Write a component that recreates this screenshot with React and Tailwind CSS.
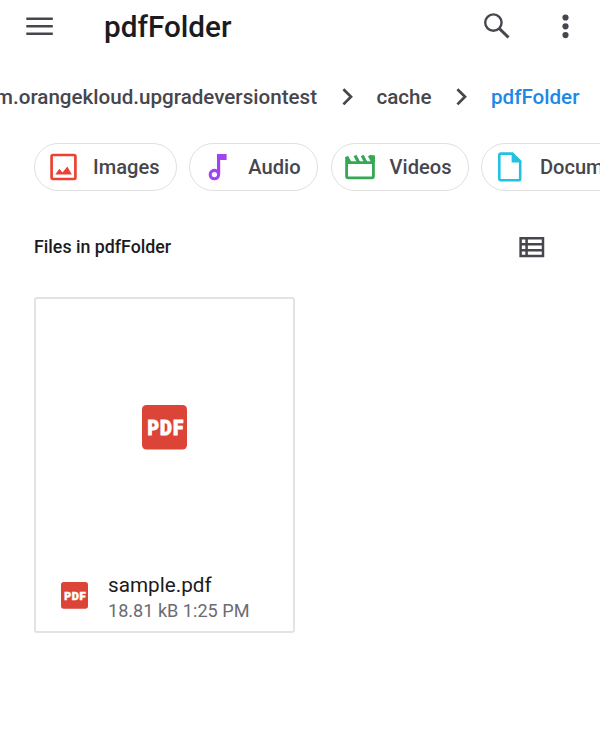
import React from "react";

function MenuIcon() {
  return (
    <svg className="h-[20px] w-[28px] shrink-0" viewBox="0 0 28 20" fill="#46464f">
      <path d="M.3.4h26.5v2.7H.3zM.3 7.9h26.5v2.7H.3zM.3 15.4h26.5v2.7H.3z" />
    </svg>
  );
}

function SearchIcon() {
  return (
    <svg className="h-[27px] w-[28px] overflow-visible" viewBox="0 0 28 27" fill="none" stroke="#46464f">
      <circle cx="10.4" cy="8.6" r="8.2" strokeWidth="2.4" />
      <path d="M16.3 14.5l9.2 9" strokeWidth="3.1" />
    </svg>
  );
}

function MoreIcon() {
  return (
    <svg className="h-[26px] w-[8px]" viewBox="0 0 8 26" fill="#46464f">
      <circle cx="4.5" cy="3.5" r="3.1" />
      <circle cx="4.5" cy="12.3" r="3.1" />
      <circle cx="4.5" cy="21.1" r="3.1" />
    </svg>
  );
}

function Chevron() {
  return (
    <svg className="h-[18px] w-[12px] shrink-0" viewBox="0 0 12 18" fill="none" stroke="#46464f" strokeWidth="2.7">
      <path d="M1.4 1.2L9 8.8l-7.6 7.6" />
    </svg>
  );
}

function ImageIcon() {
  return (
    <svg className="h-[28px] w-[28px] shrink-0" viewBox="0 0 28 28">
      <rect x="2.6" y="2" width="23.8" height="24" rx="1.4" fill="none" stroke="#ea4335" strokeWidth="2.7" />
      <path d="M6.3 21.4l4-5.6 3.3 3.7 4.7-5.9 4.6 7.8z" fill="#ea4335" />
    </svg>
  );
}

function AudioIcon() {
  return (
    <svg className="h-[28px] w-[20px] shrink-0" viewBox="0 0 20 28">
      <circle cx="6.4" cy="21.6" r="4.2" fill="none" stroke="#a142f4" strokeWidth="3.1" />
      <path d="M9 1h9.6v6h-6.4v14.6H9z" fill="#a142f4" />
    </svg>
  );
}

function VideoIcon() {
  return (
    <svg className="h-[26px] w-[31px] shrink-0" viewBox="0 0 31 26" fill="none" stroke="#34a853">
      <path d="M1.6 3v19.3q0 1.6 1.6 1.6h23.6q1.6 0 1.6-1.6V2.5M1.6 8.7h26.8" strokeWidth="2.8" />
      <path d="M1.6 2.4l3.5 6.4M10 1.5l3.7 7M17.2 1.5l3.7 7M24.4 1.5l3.7 7" strokeWidth="3.2" />
      <path d="M24.5 1.3h5.3v7h-2.4z" fill="#34a853" stroke="none" />
    </svg>
  );
}

function DocumentIcon() {
  return (
    <svg className="h-[30px] w-[25px] shrink-0" viewBox="0 0 25 30">
      <path d="M2.9 1.6h11.5l7.8 7.8v17.3q0 1.6-1.6 1.6H2.9q-1.6 0-1.6-1.6V3.2q0-1.6 1.6-1.6z" fill="none" stroke="#24c1e0" strokeWidth="2.6" />
      <path d="M13.6 1.2l9.3 9.3h-9.3z" fill="#24c1e0" />
    </svg>
  );
}

function ListIcon() {
  return (
    <svg className="h-[21px] w-[26px]" viewBox="0 0 26 21" fill="none" stroke="#46464f" strokeWidth="2.5">
      <path d="M1.6 1.3h22.4v17.8H1.6zM7.6 1.3v17.8M1.6 7.2h22.4M1.6 13.2h22.4" />
    </svg>
  );
}

function PdfIcon({ className }) {
  return (
    <svg className={className} viewBox="0 0 45 45">
      <rect width="45" height="44.5" rx="4.5" fill="#db4437" />
      <g fill="#fff" stroke="#fff" strokeWidth=".9" className="font-[Roboto,sans-serif] text-[19.5px] font-black">
        <text x="5.4" y="29.8" textLength="11.4" lengthAdjust="spacingAndGlyphs">P</text>
        <text x="18" y="29.8" textLength="11.8" lengthAdjust="spacingAndGlyphs">D</text>
        <text x="30.9" y="29.8" textLength="10.2" lengthAdjust="spacingAndGlyphs">F</text>
      </g>
    </svg>
  );
}

export default function App() {
  return (
    <div className="h-[756px] w-[600px] overflow-hidden bg-white font-[Roboto,sans-serif] text-[#46464f]">
      <header className="flex h-[54px] items-center pr-[31px] pl-[26px]">
        <MenuIcon />
        <h1 className="ml-[50px] text-[29.7px] leading-[54px] font-medium whitespace-nowrap text-[#1b1b21]">pdfFolder</h1>
        <div className="ml-auto flex items-center gap-[50px]">
          <SearchIcon />
          <MoreIcon />
        </div>
      </header>

      <nav className="mt-[28px] flex h-[30px] items-center text-[20.6px] font-medium whitespace-nowrap">
        <div className="flex w-[317px] shrink-0 justify-end">
          <span>m.orangekloud.upgradeversiontest</span>
        </div>
        <div className="ml-[25px] flex"><Chevron /></div>
        <span className="ml-[22.5px] w-[56px]">cache</span>
        <div className="ml-[23.5px] flex"><Chevron /></div>
        <span className="ml-[23px] text-[#1e88e5]">pdfFolder</span>
      </nav>

      <div className="mt-[31px] flex h-[48px] gap-[12.3px] pl-[34px] text-[20.1px] font-medium whitespace-nowrap">
        <div className="flex w-[143px] shrink-0 items-center rounded-full border-[1.5px] border-[#e0e0e0] pl-[14px]">
          <ImageIcon />
          <span className="ml-[16px]">Images</span>
        </div>
        <div className="flex w-[129px] shrink-0 items-center rounded-full border-[1.5px] border-[#e0e0e0] pl-[18px]">
          <AudioIcon />
          <span className="ml-[20px]">Audio</span>
        </div>
        <div className="flex w-[138px] shrink-0 items-center rounded-full border-[1.5px] border-[#e0e0e0] pl-[13px]">
          <VideoIcon />
          <span className="ml-[14px]">Videos</span>
        </div>
        <div className="flex w-[182px] shrink-0 items-center rounded-full border-[1.5px] border-[#e0e0e0] pl-[16px]">
          <DocumentIcon />
          <span className="ml-[17px]">Documents</span>
        </div>
      </div>

      <div className="mt-[41px] flex h-[30px] items-center justify-between pr-[55px] pl-[34px]">
        <h2 className="text-[17.8px] font-medium whitespace-nowrap text-[#1b1b21]">Files in pdfFolder</h2>
        <ListIcon />
      </div>

      <article className="mt-[35px] ml-[34px] flex h-[336px] w-[261px] flex-col rounded-[3px] border-2 border-[#e3e3e3]">
        <div className="flex h-[257px] items-center justify-center">
          <PdfIcon className="h-[45px] w-[45px]" />
        </div>
        <div className="flex h-[75px] items-center pt-[3px] pl-[25px]">
          <PdfIcon className="h-[27px] w-[27px]" />
          <div className="mt-[5px] ml-[20px] whitespace-nowrap">
            <p className="text-[20.7px] leading-[26px] text-[#1b1b21]">sample.pdf</p>
            <p className="text-[18.1px] leading-[26px] text-[#6b6b73]">18.81 kB 1:25 PM</p>
          </div>
        </div>
      </article>
    </div>
  );
}
